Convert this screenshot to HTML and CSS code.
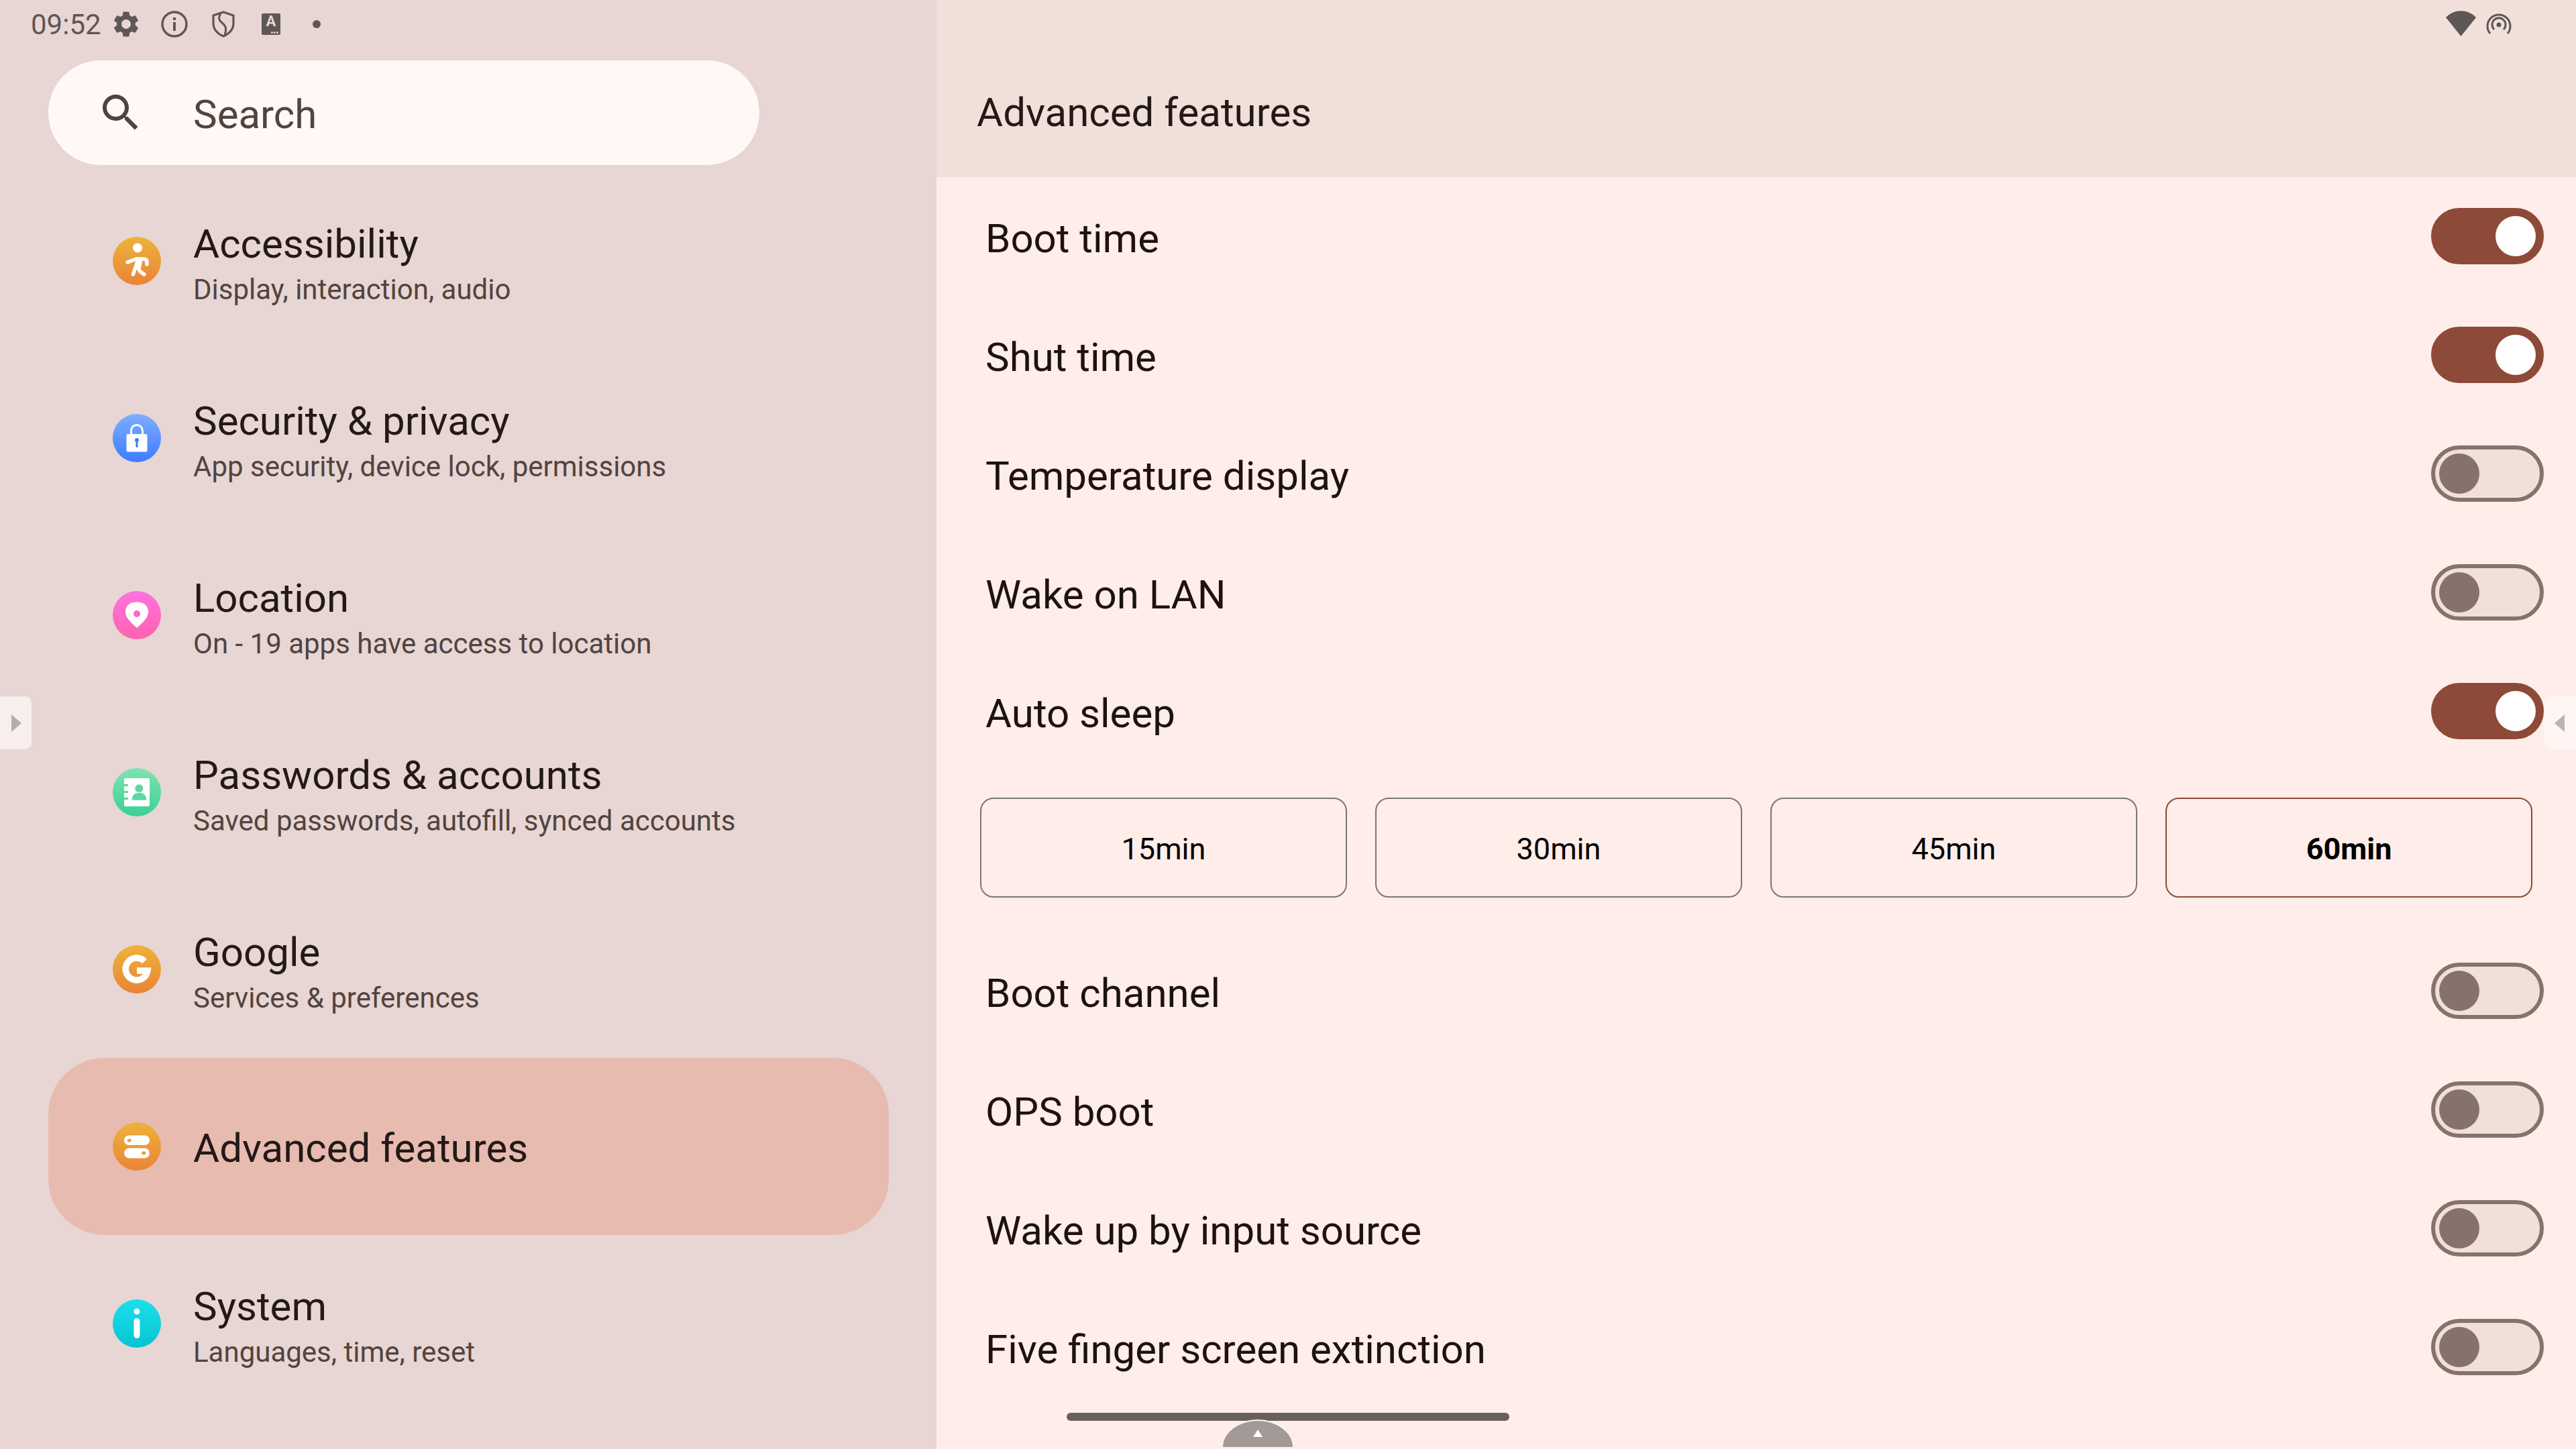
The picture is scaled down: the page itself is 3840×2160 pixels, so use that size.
FILE: index.html
```html
<!DOCTYPE html>
<html>
	<head>
		<meta charset="utf-8" />
		<title>Advanced features</title>
		<link rel="stylesheet" href="styles.css">
	</head>
	<body>
		<div class="screen">
			<!--left column-->
			<div class="side">
				<div class="status">
					<span class="time">09:52</span>
					<svg class="st-gear" viewBox="0 0 24 24"><path d="M19.14 12.94c.04-.3.06-.61.06-.94 0-.32-.02-.64-.07-.94l2.03-1.58a.49.49 0 0 0 .12-.61l-1.92-3.32a.488.488 0 0 0-.59-.22l-2.39.96c-.5-.38-1.03-.7-1.62-.94l-.36-2.54a.484.484 0 0 0-.48-.41h-3.84c-.24 0-.43.17-.47.41l-.36 2.54c-.59.24-1.13.57-1.62.94l-2.39-.96c-.22-.08-.47 0-.59.22L2.74 8.87c-.12.21-.08.47.12.61l2.03 1.58c-.05.3-.09.63-.09.94s.02.64.07.94l-2.03 1.58a.49.49 0 0 0-.12.61l1.92 3.32c.12.22.37.29.59.22l2.39-.96c.5.38 1.03.7 1.62.94l.36 2.54c.05.24.24.41.48.41h3.84c.24 0 .44-.17.47-.41l.36-2.54c.59-.24 1.13-.56 1.62-.94l2.39.96c.22.08.47 0 .59-.22l1.92-3.32c.12-.22.07-.47-.12-.61l-2.01-1.58zM12 15.6c-1.98 0-3.6-1.62-3.6-3.6s1.62-3.6 3.6-3.6 3.6 1.62 3.6 3.6-1.62 3.6-3.6 3.6z"/></svg>
					<svg class="st-info" viewBox="0 0 40 40"><circle cx="20" cy="20" r="18" fill="none" stroke="#5e5755" stroke-width="3.4"/><rect x="18" y="17" width="4" height="13"/><rect x="18" y="10" width="4" height="4"/></svg>
					<svg class="st-shield" viewBox="0 0 34 40"><path d="M17 2 L32 7 V19 C32 28 25 35 17 38 C9 35 2 28 2 19 V7 Z" fill="none" stroke="#5e5755" stroke-width="3.2" stroke-linejoin="round"/><path d="M13 4 C9 10 10 14 15 18 C21 23 22 27 19 36" fill="none" stroke="#5e5755" stroke-width="3"/></svg>
					<div class="st-key">
						<span class="st-key-a">A</span>
						<span class="st-key-dots"><i></i><i></i><i></i></span>
					</div>
					<span class="st-dot"></span>
				</div>
				<div class="search">
					<svg class="search-icon" viewBox="0 0 24 24"><path d="M15.5 14h-.79l-.28-.27A6.471 6.471 0 0 0 16 9.5 6.5 6.5 0 1 0 9.5 16c1.61 0 3.09-.59 4.23-1.57l.27.28v.79l5 4.99L20.49 19l-4.99-5zm-6 0C7.01 14 5 11.99 5 9.5S7.01 5 9.5 5 14 7.01 14 9.5 11.99 14 9.5 14z"/></svg>
					<span class="search-text">Search</span>
				</div>
				<div class="menu">
					<div class="item">
						<div class="ic orange">
							<svg viewBox="0 0 72 72"><circle cx="37" cy="16.500" r="7" fill="#fff"/><path d="M22 38 L35 33 H46 Q51 33 51 38 V41 M38 33 L30.500 56 M37 45 L41 52 L47 56" fill="none" stroke="#fff" stroke-width="5.500" stroke-linecap="round" stroke-linejoin="round"/><path d="M34 31 H45 L42 47 H35 Z" fill="#fff"/></svg>
						</div>
						<div class="txt">
							<div class="t">Accessibility</div>
							<div class="s">Display, interaction, audio</div>
						</div>
					</div>
					<div class="item">
						<div class="ic blue">
							<svg viewBox="0 0 72 72"><path d="M27.500 31 V25 A8.500 8.500 0 0 1 44.500 25 V31" fill="none" stroke="#fff" stroke-width="2.800"/><rect x="20.500" y="30" width="31" height="26.500" rx="2" fill="#fff"/><circle cx="36" cy="39" r="3" fill="#3f7bff"/><rect x="34.500" y="39" width="3" height="11" rx="1" fill="#3f7bff"/></svg>
						</div>
						<div class="txt">
							<div class="t">Security &amp; privacy</div>
							<div class="s">App security, device lock, permissions</div>
						</div>
					</div>
					<div class="item">
						<div class="ic pink">
							<svg viewBox="0 0 72 72"><path d="M36 16.500 C47 16.500 53 22 53 31 C53 41 42 49 36 55 C30 49 19 41 19 31 C19 22 25 16.500 36 16.500 Z" fill="#fff"/><circle cx="36" cy="34" r="5" fill="#ff68c4"/></svg>
						</div>
						<div class="txt">
							<div class="t">Location</div>
							<div class="s">On - 19 apps have access to location</div>
						</div>
					</div>
					<div class="item">
						<div class="ic green">
							<svg viewBox="0 0 72 72"><rect x="17" y="15" width="38" height="42" rx="2" fill="#fff"/><g fill="#5ed8a2"><rect x="17" y="24" width="6" height="3"/><rect x="17" y="34" width="6" height="3"/><rect x="17" y="44" width="6" height="3"/><circle cx="39.300" cy="30.300" r="6"/><path d="M28.700 47.700 C28.700 40 33 36.700 39.300 36.700 C45.500 36.700 50.300 40 50.300 47.700 Z"/></g></svg>
						</div>
						<div class="txt">
							<div class="t">Passwords &amp; accounts</div>
							<div class="s">Saved passwords, autofill, synced accounts</div>
						</div>
					</div>
					<div class="item">
						<div class="ic orange">
							<svg viewBox="0 0 72 72"><path d="M47.500 24 A16.500 16.500 0 1 0 52 38 H36" fill="none" stroke="#fff" stroke-width="9.500"/></svg>
						</div>
						<div class="txt">
							<div class="t">Google</div>
							<div class="s">Services &amp; preferences</div>
						</div>
					</div>
					<div class="item on">
						<div class="ic orange">
							<svg viewBox="0 0 72 72"><rect x="17" y="19.500" width="38" height="14.500" rx="7.200" fill="#fff"/><rect x="17" y="38.500" width="38" height="15" rx="7.500" fill="#fff"/><ellipse cx="24.700" cy="27" rx="3" ry="2.500" fill="#eba238"/><ellipse cx="46.300" cy="45.800" rx="3" ry="2.500" fill="#eb9638"/></svg>
						</div>
						<div class="txt">
							<div class="t">Advanced features</div>
						</div>
					</div>
					<div class="item">
						<div class="ic cyan">
							<svg viewBox="0 0 72 72"><circle cx="36" cy="18" r="4.500" fill="#fff"/><rect x="31.500" y="28" width="9" height="30" rx="4.500" fill="#fff"/></svg>
						</div>
						<div class="txt">
							<div class="t">System</div>
							<div class="s">Languages, time, reset</div>
						</div>
					</div>
				</div>
			</div>

			<!--right column-->
			<div class="main">
				<div class="head">
					<div class="head-icons">
						<svg class="st-wifi" viewBox="0 0 45 38"><path d="M0 10 C12 -3 33 -3 45 10 L22.500 38 Z"/></svg>
						<svg class="st-hot" viewBox="0 0 38 34" fill="none" stroke="#5e5755" stroke-width="3"><path d="M6 32 A17 17 0 1 1 32 32"/><path d="M12 26 A10 10 0 1 1 26 26"/><circle cx="19" cy="19" r="3.500" fill="#5e5755" stroke="none"/></svg>
					</div>
					<div class="head-title">Advanced features</div>
				</div>
				<div class="rows">
					<div class="row"><span>Boot time</span><div class="sw yes"><i></i></div></div>
					<div class="row"><span>Shut time</span><div class="sw yes"><i></i></div></div>
					<div class="row"><span>Temperature display</span><div class="sw"><i></i></div></div>
					<div class="row"><span>Wake on LAN</span><div class="sw"><i></i></div></div>
					<div class="row"><span>Auto sleep</span><div class="sw yes"><i></i></div></div>
					<div class="btns">
						<div class="btn">15min</div>
						<div class="btn">30min</div>
						<div class="btn">45min</div>
						<div class="btn cur">60min</div>
					</div>
					<div class="row"><span>Boot channel</span><div class="sw"><i></i></div></div>
					<div class="row"><span>OPS boot</span><div class="sw"><i></i></div></div>
					<div class="row"><span>Wake up by input source</span><div class="sw"><i></i></div></div>
					<div class="row"><span>Five finger screen extinction</span><div class="sw"><i></i></div></div>
				</div>
			</div>

			<!--things floating over the screen-->
			<div class="tab tab-l"></div>
			<div class="tab tab-r"></div>
			<div class="navbar"></div>
			<div class="pull"><b></b></div>
		</div>
	</body>
</html>
```

FILE: styles.css
```css
*{
	margin: 0;
	padding: 0;
	box-sizing: border-box;
}
html, body{
	width: 3840px;
	height: 2160px;
	overflow: hidden;
}
body{
	font-family: Roboto, "Liberation Sans", sans-serif;
}
.screen{
	width: 3840px;
	height: 2160px;
	display: flex;
	position: relative;
	overflow: hidden;
}

/*left column*/
.side{
	width: 1396px;
	height: 2160px;
	background: #e7d6d3;
	flex-shrink: 0;
}
.status{
	height: 72px;
	display: flex;
	align-items: center;
	padding-left: 46px;
	color: #5e5755;
	fill: #5e5755;
}
.time{
	font-size: 42px;
	width: 119px;
}
.st-gear{
	width: 46px;
	height: 46px;
}
.st-info{
	width: 40px;
	height: 40px;
	margin-left: 29px;
}
.st-shield{
	width: 34px;
	height: 40px;
	margin-left: 36px;
}
.st-key{
	width: 28px;
	height: 32px;
	margin-left: 40px;
	background: #5e5755;
	border-radius: 2px;
	position: relative;
	color: #e7d6d3;
	text-align: center;
}
.st-key-a{
	display: block;
	font-size: 22px;
	line-height: 24px;
	font-weight: 700;
}
.st-key-dots{
	position: absolute;
	right: 3px;
	bottom: 2px;
	display: flex;
	gap: 1px;
}
.st-key-dots i{
	width: 3px;
	height: 3px;
	border-radius: 50%;
	background: #e7d6d3;
}
.st-dot{
	width: 12px;
	height: 12px;
	margin-left: 48px;
	border-radius: 50%;
	background: #5e5755;
}

.search{
	width: 1060px;
	height: 156px;
	margin: 18px 0 0 72px;
	padding-left: 72px;
	display: flex;
	align-items: center;
	gap: 72px;
	background: #fff8f6;
	border-radius: 78px;
}
.search-icon{
	width: 72px;
	height: 72px;
	fill: #4f4340;
}
.search-text{
	font-size: 60px;
	padding-top: 4px;
	color: #53433f;
}

.menu{
	margin: 11px 0 0 72px;
	width: 1253px;
}
.item{
	height: 264px;
	display: flex;
	align-items: center;
	padding-left: 96px;
	gap: 48px;
	border-radius: 84px;
}
.item.on{
	background: #e7bbb0;
}
.ic{
	width: 72px;
	height: 72px;
	border-radius: 50%;
	flex-shrink: 0;
}
.ic svg{
	display: block;
	width: 72px;
	height: 72px;
}
.orange{
	background: linear-gradient(#eeb23a, #ea8437);
}
.blue{
	background: linear-gradient(#7eaeff, #3f7bff);
}
.pink{
	background: linear-gradient(#ff72e0, #ff62ae);
}
.green{
	background: linear-gradient(#7fe2ae, #3bd096);
}
.cyan{
	background: linear-gradient(#1ce0ec, #06c4d0);
}
.txt{
	padding-top: 12px;
}
.on .txt{
	padding-top: 6px;
}
.t{
	font-size: 60px;
	line-height: 72px;
	color: #231917;
}
.s{
	font-size: 42px;
	line-height: 60px;
	margin-top: 2px;
	color: #53433f;
}

/*right column*/
.main{
	flex: 1;
	background: #ffede9;
}
.head{
	height: 264px;
	background: #f1e0d9;
	position: relative;
	padding: 132px 0 0 60px;
}
.head-icons{
	position: absolute;
	left: 2250px;
	top: 16px;
	display: flex;
	gap: 15px;
	fill: #5e5755;
}
.st-wifi{
	width: 45px;
	height: 38px;
}
.st-hot{
	width: 38px;
	height: 34px;
	margin-top: 2px;
}
.head-title{
	font-size: 60px;
	line-height: 72px;
	color: #231917;
}
.rows{
	margin-top: -1px;
}
.row{
	height: 177px;
	display: flex;
	align-items: center;
	justify-content: space-between;
	padding: 0 48px 0 73px;
	font-size: 60px;
	color: #1c1210;
}
.row span{
	padding-top: 8px;
}
.sw{
	width: 168px;
	height: 84px;
	border-radius: 42px;
	border: 6px solid #85736b;
	background: #f1e0d9;
	padding: 6px;
	display: flex;
}
.sw i{
	width: 60px;
	height: 60px;
	border-radius: 50%;
	background: #85736b;
}
.sw.yes{
	background: #8d4a38;
	border-color: #8d4a38;
	justify-content: flex-end;
}
.sw.yes i{
	background: #fff;
}
.btns{
	height: 240px;
	padding: 41px 0 0 65px;
	display: flex;
	gap: 42px;
}
.btn{
	width: 547px;
	height: 149px;
	border: 2px solid #777;
	border-radius: 20px;
	display: flex;
	align-items: center;
	justify-content: center;
	padding-top: 3px;
	font-size: 45px;
	color: #000;
}
.btn.cur{
	border-color: #8d4a38;
	font-weight: 700;
}

/*floating bits*/
.tab{
	position: absolute;
	top: 1038px;
	width: 47px;
	height: 79px;
	border-radius: 10px;
}
.tab::after{
	content: "";
	position: absolute;
	top: 27px;
	border-top: 13px solid transparent;
	border-bottom: 13px solid transparent;
}
.tab-l{
	left: 0;
	background: #f7eeed;
	border-radius: 0 10px 10px 0;
}
.tab-l::after{
	left: 17px;
	border-left: 15px solid #b0aeae;
}
.tab-r{
	right: 0;
	background: #fff6f4;
	border-radius: 10px 0 0 10px;
}
.tab-r::after{
	left: 15px;
	border-right: 15px solid #b8b4b3;
}
.navbar{
	position: absolute;
	left: 1590px;
	top: 2106px;
	width: 660px;
	height: 12px;
	border-radius: 6px;
	background: #68605d;
}
.pull{
	position: absolute;
	left: 1823px;
	top: 2118px;
	width: 104px;
	height: 39px;
	background: #a39a97;
	border-radius: 52px 52px 0 0 / 39px 39px 0 0;
	box-shadow: 0 -1px 0 1px #fff4f1;
}
.pull b{
	position: absolute;
	left: 45px;
	top: 13px;
	border-left: 7px solid transparent;
	border-right: 7px solid transparent;
	border-bottom: 11px solid #fff;
}
```
